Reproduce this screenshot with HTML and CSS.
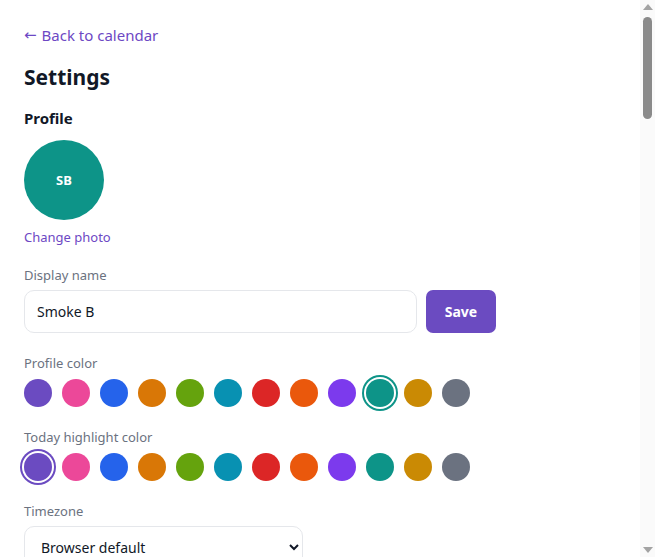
FILE: index.html
```html
<!DOCTYPE html>
<html lang="en">
<head>
<meta charset="utf-8">
<title>Settings</title>
<link rel="stylesheet" href="styles.css">
</head>
<body>
<main class="page">
  <a class="back" href="#"><span class="arrow">←</span><span>Back to calendar</span></a>
  <h1 class="title">Settings</h1>
  <h2 class="section-title">Profile</h2>
  <div class="avatar">SB</div>
  <a class="change-photo" href="#">Change photo</a>

  <label class="label label-first">Display name</label>
  <div class="name-row">
    <input class="text-input" type="text" value="Smoke B">
    <button class="save-btn">Save</button>
  </div>

  <label class="label">Profile color</label>
  <div class="swatches">
    <span class="sw c1"></span><span class="sw c2"></span><span class="sw c3"></span><span class="sw c4"></span><span class="sw c5"></span><span class="sw c6"></span><span class="sw c7"></span><span class="sw c8"></span><span class="sw c9"></span><span class="sw c10 sel"></span><span class="sw c11"></span><span class="sw c12"></span>
  </div>

  <label class="label">Today highlight color</label>
  <div class="swatches">
    <span class="sw c1 sel"></span><span class="sw c2"></span><span class="sw c3"></span><span class="sw c4"></span><span class="sw c5"></span><span class="sw c6"></span><span class="sw c7"></span><span class="sw c8"></span><span class="sw c9"></span><span class="sw c10"></span><span class="sw c11"></span><span class="sw c12"></span>
  </div>

  <label class="label">Timezone</label>
  <div class="select-wrap">
    <select class="select">
      <option>Browser default</option>
    </select>
  </div>
</main>
<div class="scrollbar" aria-hidden="true">
  <span class="sb-up"></span>
  <span class="sb-thumb"></span>
  <span class="sb-down"></span>
</div>
</body>
</html>
```

FILE: styles.css
```css
html, body {
  margin: 0;
  padding: 0;
  background: #ffffff;
  overflow: hidden;
  height: 100%;
}
body {
  font-family: "Noto Sans", "Open Sans", sans-serif;
  color: #111827;
}
.page {
  display: flex;
  flex-direction: column;
  align-items: flex-start;
  padding: 24px 24px 0;
}
.back {
  display: flex;
  align-items: center;
  gap: 5px;
  height: 22px;
  font-size: 15px;
  line-height: 22px;
  color: #6d48c4;
  text-decoration: none;
}
.arrow {
  font-family: "DejaVu Sans", sans-serif;
  font-size: 15px;
  line-height: 22px;
}
.title {
  margin: 17px 0 0;
  font-size: 21px;
  line-height: 28px;
  font-weight: 700;
  color: #111827;
}
.section-title {
  margin: 17px 0 0;
  font-size: 15px;
  line-height: 20px;
  font-weight: 700;
  color: #111827;
}
.avatar {
  margin-top: 12px;
  width: 80px;
  height: 80px;
  border-radius: 50%;
  background: #0d9488;
  color: #ffffff;
  display: flex;
  align-items: center;
  justify-content: center;
  font-size: 13px;
  font-weight: 700;
}
.change-photo {
  margin-top: 8px;
  font-size: 13px;
  line-height: 18px;
  color: #6d48c4;
  text-decoration: none;
}
.label {
  margin-top: 21px;
  font-size: 13px;
  line-height: 18px;
  color: #6b7280;
}
.label-first {
  margin-top: 20px;
}
.name-row {
  margin-top: 6px;
  display: flex;
  gap: 9px;
  width: 472px;
}
.text-input {
  flex: 1;
  height: 43px;
  box-sizing: border-box;
  border: 1.5px solid #e5e7eb;
  border-radius: 10px;
  padding: 0 12px;
  font-family: inherit;
  font-size: 14px;
  color: #111827;
  background: #fff;
  outline: none;
}
.save-btn {
  width: 70px;
  height: 43px;
  border: none;
  border-radius: 7px;
  background: #6b4bc1;
  color: #ffffff;
  font-family: inherit;
  font-size: 14px;
  font-weight: 700;
}
.swatches {
  margin-top: 7px;
  display: flex;
  gap: 10px;
}
.sw {
  width: 28px;
  height: 28px;
  border-radius: 50%;
  display: block;
}
.sw.sel {
  box-shadow: 0 0 0 2px #ffffff, 0 0 0 4px currentColor;
}
.c1 { background: #6b4bc1; color: #6b4bc1; }
.c2 { background: #ec4899; color: #ec4899; }
.c3 { background: #2563eb; color: #2563eb; }
.c4 { background: #d97706; color: #d97706; }
.c5 { background: #65a30d; color: #65a30d; }
.c6 { background: #0891b2; color: #0891b2; }
.c7 { background: #dc2626; color: #dc2626; }
.c8 { background: #ea580c; color: #ea580c; }
.c9 { background: #7c3aed; color: #7c3aed; }
.c10 { background: #0d9488; color: #0d9488; }
.c11 { background: #ca8a04; color: #ca8a04; }
.c12 { background: #6b7280; color: #6b7280; }
.select-wrap {
  margin-top: 6px;
}
.select {
  width: 279px;
  height: 43px;
  box-sizing: border-box;
  border: 1.5px solid #e5e7eb;
  border-radius: 10px;
  padding: 0 12px;
  font-family: inherit;
  font-size: 14px;
  color: #111827;
  background: #fff;
}
.scrollbar {
  position: fixed;
  top: 0;
  right: 0;
  bottom: 0;
  width: 15px;
  background: #fafafa;
}
.sb-up, .sb-down {
  position: absolute;
  left: 3px;
  width: 0;
  height: 0;
  border-left: 5px solid transparent;
  border-right: 5px solid transparent;
}
.sb-up {
  top: 4px;
  border-bottom: 6px solid #a3a3a3;
}
.sb-down {
  bottom: 4px;
  border-top: 6px solid #a3a3a3;
}
.sb-thumb {
  position: absolute;
  top: 17px;
  left: 3px;
  width: 9px;
  height: 102px;
  border-radius: 5px;
  background: #8a8a8a;
}
```
